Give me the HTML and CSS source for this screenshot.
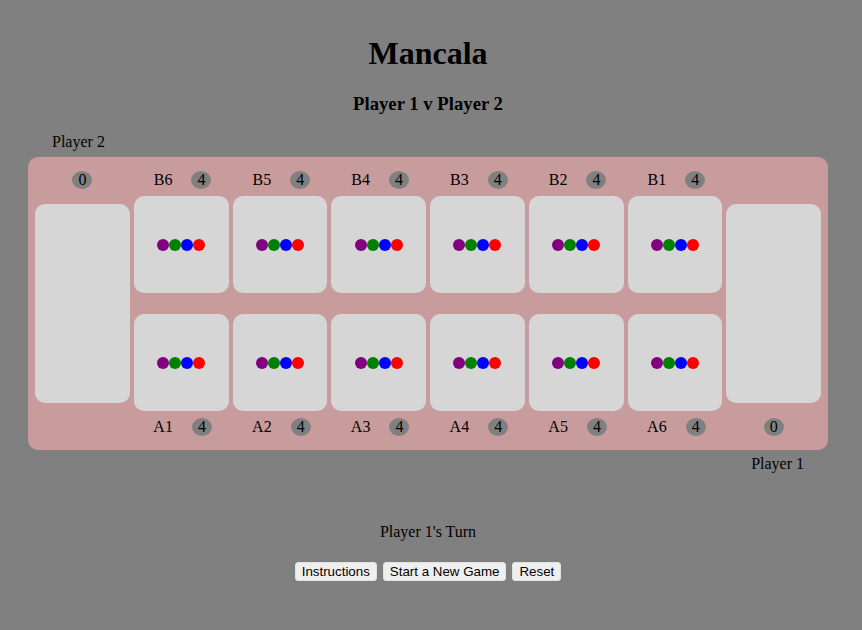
FILE: index.html
```html
<!DOCTYPE html>
<html>
<head>
    <link rel="stylesheet" href="styles.css">
</head>
<body>

<div class="page">
    <h1>Mancala</h1>
    <h3>Player 1 v Player 2</h3>

    <div class="player-name left">Player 2</div>

    <div id="board">
        <!-- Player 2 labels -->
        <div class="labels">
            <div class="label store-label"><span class="count">0</span></div>
            <div class="label">B6 <span class="count">4</span></div>
            <div class="label">B5 <span class="count">4</span></div>
            <div class="label">B4 <span class="count">4</span></div>
            <div class="label">B3 <span class="count">4</span></div>
            <div class="label">B2 <span class="count">4</span></div>
            <div class="label">B1 <span class="count">4</span></div>
            <div class="label store-label"></div>
        </div>

        <div class="pits">
            <div class="store store-left"></div>
            <div class="pit"><span class="stone purple"></span><span class="stone green"></span><span class="stone blue"></span><span class="stone red"></span></div>
            <div class="pit"><span class="stone purple"></span><span class="stone green"></span><span class="stone blue"></span><span class="stone red"></span></div>
            <div class="pit"><span class="stone purple"></span><span class="stone green"></span><span class="stone blue"></span><span class="stone red"></span></div>
            <div class="pit"><span class="stone purple"></span><span class="stone green"></span><span class="stone blue"></span><span class="stone red"></span></div>
            <div class="pit"><span class="stone purple"></span><span class="stone green"></span><span class="stone blue"></span><span class="stone red"></span></div>
            <div class="pit"><span class="stone purple"></span><span class="stone green"></span><span class="stone blue"></span><span class="stone red"></span></div>
            <div class="store store-right"></div>

            <div class="pit"><span class="stone purple"></span><span class="stone green"></span><span class="stone blue"></span><span class="stone red"></span></div>
            <div class="pit"><span class="stone purple"></span><span class="stone green"></span><span class="stone blue"></span><span class="stone red"></span></div>
            <div class="pit"><span class="stone purple"></span><span class="stone green"></span><span class="stone blue"></span><span class="stone red"></span></div>
            <div class="pit"><span class="stone purple"></span><span class="stone green"></span><span class="stone blue"></span><span class="stone red"></span></div>
            <div class="pit"><span class="stone purple"></span><span class="stone green"></span><span class="stone blue"></span><span class="stone red"></span></div>
            <div class="pit"><span class="stone purple"></span><span class="stone green"></span><span class="stone blue"></span><span class="stone red"></span></div>
        </div>

        <!-- Player 1 labels -->
        <div class="labels">
            <div class="label store-label"></div>
            <div class="label">A1 <span class="count">4</span></div>
            <div class="label">A2 <span class="count">4</span></div>
            <div class="label">A3 <span class="count">4</span></div>
            <div class="label">A4 <span class="count">4</span></div>
            <div class="label">A5 <span class="count">4</span></div>
            <div class="label">A6 <span class="count">4</span></div>
            <div class="label store-label"><span class="count">0</span></div>
        </div>
    </div>

    <div class="player-name right">Player 1</div>

    <div id="turn">Player 1's Turn</div>

    <div class="buttons">
        <button>Instructions</button>
        <button>Start a New Game</button>
        <button>Reset</button>
    </div>
</div>

</body>
</html>
```

FILE: styles.css
```css
body {
    margin: 0;
    background-color: #808080;
    font-family: 'Liberation Serif', 'Times New Roman', serif;
    font-size: 16px;
    color: #000;
}

.page {
    margin-right: 6px;
}

h1 {
    margin: 35px 0 0;
    font-size: 32px;
    line-height: 36px;
    text-align: center;
}

h3 {
    margin: 22px 0 0;
    font-size: 18.72px;
    line-height: 22px;
    text-align: center;
}

.player-name {
    width: 752px;
    margin: 0 auto;
    line-height: 18px;
}

.player-name.left {
    margin-top: 18px;
}

.player-name.right {
    margin-top: 5px;
    text-align: right;
}

#board {
    width: 786px;
    margin: 6px auto 0;
    padding: 13px 7px;
    background-color: #c89c9c;
    border-radius: 10px;
}

.labels {
    display: grid;
    grid-template-columns: repeat(8, 1fr);
    column-gap: 4px;
    height: 20px;
}

.label {
    display: flex;
    justify-content: center;
    align-items: center;
    gap: 19px;
    padding-left: 3px;
    line-height: 18px;
}

.label.store-label {
    padding-left: 0;
}

.count {
    display: inline-block;
    width: 20px;
    height: 18px;
    line-height: 18px;
    text-align: center;
    border-radius: 50%;
    background-color: #808080;
}

.pits {
    display: grid;
    grid-template-columns: repeat(8, 1fr);
    grid-template-rows: 97px 97px;
    column-gap: 4px;
    row-gap: 21px;
    margin: 6px 0;
}

.pit, .store {
    display: flex;
    justify-content: center;
    align-items: center;
    background-color: #d6d6d6;
    border-radius: 10px;
}

.store {
    grid-row: 1 / 3;
    align-self: center;
    height: 199px;
}

.store-left {
    grid-column: 1;
}

.store-right {
    grid-column: 8;
}

.stone {
    width: 12px;
    height: 12px;
    border-radius: 50%;
}

.purple { background-color: purple; }
.green { background-color: green; }
.blue { background-color: blue; }
.red { background-color: red; }

#turn {
    margin-top: 50px;
    line-height: 18px;
    text-align: center;
}

.buttons {
    display: flex;
    justify-content: center;
    gap: 6px;
    margin-top: 21px;
}

button {
    height: 19px;
    padding: 0 6px;
    font-family: 'Liberation Sans', Arial, sans-serif;
    font-size: 13.33px;
    color: #000;
    background-color: #efefef;
    border: 1px solid #e2e2e2;
    border-radius: 3px;
}
```
